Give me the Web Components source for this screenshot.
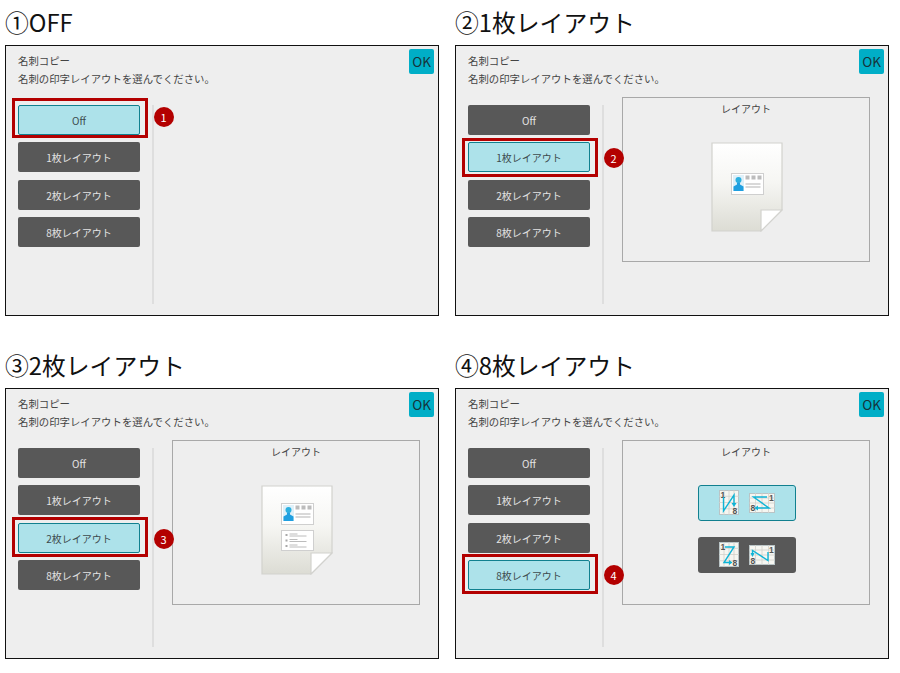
<!DOCTYPE html>
<html lang="ja">
<head>
<meta charset="utf-8">
<style>
  html, body { margin: 0; background: #fff; }
  body { width: 900px; height: 673px; overflow: hidden; }
  #sheet {
    display: grid;
    grid-template-columns: 434px 434px;
    column-gap: 16px;
    row-gap: 27px;
    padding: 0 0 0 5px;
  }
</style>
</head>
<body>
<div id="sheet">
  <copy-step heading="①OFF">
    <mode-button selected step="1">Off</mode-button>
    <mode-button>1枚レイアウト</mode-button>
    <mode-button>2枚レイアウト</mode-button>
    <mode-button>8枚レイアウト</mode-button>
  </copy-step>
  <copy-step heading="②1枚レイアウト">
    <mode-button>Off</mode-button>
    <mode-button selected step="2">1枚レイアウト</mode-button>
    <mode-button>2枚レイアウト</mode-button>
    <mode-button>8枚レイアウト</mode-button>
    <layout-box slot="preview"><paper-sheet cards="1"></paper-sheet></layout-box>
  </copy-step>
  <copy-step heading="③2枚レイアウト">
    <mode-button>Off</mode-button>
    <mode-button>1枚レイアウト</mode-button>
    <mode-button selected step="3">2枚レイアウト</mode-button>
    <mode-button>8枚レイアウト</mode-button>
    <layout-box slot="preview"><paper-sheet cards="2"></paper-sheet></layout-box>
  </copy-step>
  <copy-step heading="④8枚レイアウト">
    <mode-button>Off</mode-button>
    <mode-button>1枚レイアウト</mode-button>
    <mode-button>2枚レイアウト</mode-button>
    <mode-button selected step="4">8枚レイアウト</mode-button>
    <layout-box slot="preview">
      <order-choices></order-choices>
    </layout-box>
  </copy-step>
</div>

<script>
const jpFont = '"Noto Sans CJK JP", "Noto Sans", sans-serif';

// the red callouts were placed by hand in the source, so each sits a little differently
// step: [mark top, mark height, badge offset from button centre]
const callouts = {
  1: [-6.8, 40.3, -2.8],
  2: [-3.5, 39, 1],
  3: [-4.8, 39.4, 1.5],
  4: [-5.4, 40, 0.3],
};

class CopyStep extends HTMLElement {
  constructor() {
    super();
    this.attachShadow({ mode: "open" });
    this.shadowRoot.innerHTML = `
      <style>
        :host { display: block; font-family: ${jpFont}; }
        h2 {
          margin: 0;
          height: 45px;
          font-weight: 400;
          font-size: 23.8px;
          line-height: 44px;
          color: #111;
          white-space: nowrap;
        }
        .screen {
          box-sizing: border-box;
          height: 271px;
          border: 1.5px solid #111;
          background: #eeeeee;
          padding: 6px 4px 0 12px;
          color: #444;
        }
        .top { display: flex; justify-content: space-between; height: 53px; }
        .msg { font-size: 10.4px; line-height: 18px; }
        .ok {
          width: 25px;
          height: 25px;
          margin-top: -3px;
          border-radius: 2px;
          background: #00aec7;
          color: #16323a;
          font-size: 13.5px;
          line-height: 25px;
          text-align: center;
        }
        .body { display: flex; height: 199px; }
        .modes {
          display: flex;
          flex-direction: column;
          gap: 7.3px;
          width: 122px;
          margin-right: 12px;
        }
        .rule { width: 2px; background: #dedede; }
        .preview { margin: -8.5px 0 0 18px; }
      </style>
      <h2></h2>
      <div class="screen">
        <div class="top">
          <div class="msg">名刺コピー<br>名刺の印字レイアウトを選んでください。</div>
          <div class="ok">OK</div>
        </div>
        <div class="body">
          <div class="modes"><slot></slot></div>
          <div class="rule"></div>
          <div class="preview"><slot name="preview"></slot></div>
        </div>
      </div>`;
  }
  connectedCallback() {
    this.shadowRoot.querySelector("h2").textContent = this.getAttribute("heading");
  }
}

class ModeButton extends HTMLElement {
  constructor() {
    super();
    this.attachShadow({ mode: "open" });
    this.shadowRoot.innerHTML = `
      <style>
        :host {
          display: block;
          position: relative;
          box-sizing: border-box;
          height: 30px;
          border-radius: 2px;
          background: #585858;
          color: #e4e4e4;
          font-size: 10px;
          line-height: 32px;
          text-align: center;
        }
        :host([selected]) {
          background: #ade2ea;
          color: #3c4a4d;
          border: 1.5px solid #11808f;
          line-height: 29px;
        }
        .mark {
          position: absolute;
          left: -7.5px;
          width: 130px;
          border: 3px solid #b30000;
        }
        .badge {
          position: absolute;
          left: 134.5px;
          width: 20px;
          height: 20px;
          border-radius: 50%;
          background: #b30000;
          color: #fff;
          font-size: 11px;
          line-height: 20px;
        }
      </style>
      <slot></slot>`;
  }
  connectedCallback() {
    const step = this.getAttribute("step");
    if (step) {
      const [markTop, markHeight, badgeOffset] = callouts[step];
      // offsets are from the padding box, which starts inside the 1.5px border
      this.shadowRoot.innerHTML += `
        <div class="mark" style="top:${markTop - 1.5}px;height:${markHeight - 6}px"></div>
        <div class="badge" style="top:${3.5 + badgeOffset}px">${step}</div>`;
    }
  }
}

class LayoutBox extends HTMLElement {
  constructor() {
    super();
    this.attachShadow({ mode: "open" });
    this.shadowRoot.innerHTML = `
      <style>
        :host {
          display: flex;
          flex-direction: column;
          align-items: center;
          box-sizing: border-box;
          width: 248px;
          height: 165px;
          border: 1px solid #a8a8a8;
          color: #444;
        }
        .title { font-size: 10px; line-height: 14px; margin: 4px 0 0; height: 14px; }
        .content { margin: 26px 0 0 1px; }
      </style>
      <div class="title">レイアウト</div>
      <div class="content"><slot></slot></div>`;
  }
}

const cardPhoto = (x, y) => `
  <rect x="${x}" y="${y}" width="32" height="21" fill="#fff" stroke="#cfcfcf" stroke-width="1"/>
  <rect x="${x + 1.5}" y="${y + 1.5}" width="11" height="16" fill="#dff0f8"/>
  <circle cx="${x + 7}" cy="${y + 6.5}" r="3" fill="#2cb0e0"/>
  <path d="M${x + 5.5} ${y + 9}h3v2l3.5 2v4.500h-10v-4.500l3.500-2z" fill="#1f9fe0"/>
  <path d="M${x + 14} ${y + 2}h4v4h-4zM${x + 20} ${y + 2}h4v4h-4zM${x + 26} ${y + 2}h4v4h-4z" fill="#bcbcbc"/>
  <path d="M${x + 14} ${y + 10.500}h15M${x + 14} ${y + 13.500}h15" stroke="#b4b4b4" stroke-width="1.2"/>`;

const cardList = (x, y) => `
  <rect x="${x}" y="${y}" width="32" height="20" fill="#fff" stroke="#cfcfcf" stroke-width="1"/>
  <path d="M${x + 4} ${y + 3.500}h2v2h-2zM${x + 4} ${y + 9}h2v2h-2zM${x + 4} ${y + 14.500}h2v2h-2z" fill="#a8a8a8"/>
  <path d="M${x + 8} ${y + 3.500}h8M${x + 8} ${y + 5.500}h17M${x + 8} ${y + 9}h8M${x + 8} ${y + 11}h17M${x + 8} ${y + 14.500}h8M${x + 8} ${y + 16.500}h17" stroke="#bcbcbc" stroke-width="1"/>`;

class PaperSheet extends HTMLElement {
  constructor() {
    super();
    this.attachShadow({ mode: "open" });
  }
  connectedCallback() {
    const two = this.getAttribute("cards") === "2";
    const id = "paper" + this.getAttribute("cards");
    this.shadowRoot.innerHTML = `
      <style>:host { display: block; width: 72px; height: 90px; } svg { display: block; }</style>
      <svg width="72" height="90" viewBox="0 0 72 90">
        <defs><linearGradient id="${id}" x1="0" y1="0" x2="0" y2="1">
          <stop offset="0" stop-color="#ffffff"/><stop offset="0.45" stop-color="#f6f6f3"/><stop offset="1" stop-color="#dcdcd4"/>
        </linearGradient></defs>
        <path d="M1 1H71V68L50 89H1z" fill="url(#${id})" stroke="#d2d2ce" stroke-width="1.2"/>
        <path d="M50 89V68H71z" fill="#fff" stroke="#d2d2ce" stroke-width="1.2"/>
        ${two ? cardPhoto(20.5, 18.5) + cardList(20.5, 45.5) : cardPhoto(20.5, 31.5)}
      </svg>`;
  }
}

// one small page with a reading-order arrow, used inside the 8-up choices
class OrderIcon extends HTMLElement {
  constructor() {
    super();
    this.attachShadow({ mode: "open" });
  }
  connectedCallback() {
    const land = this.hasAttribute("landscape");
    const w = land ? 26 : 20;
    const h = land ? 20 : 25;
    let lines = "";
    for (let i = 1; i < 4; i++) {
      lines += `<path d="M${(w / 4) * i} 0V${h}" stroke="#d2d2cc" stroke-width=".8"/>`;
      lines += `<path d="M0 ${(h / 4) * i}H${w}" stroke="#d2d2cc" stroke-width=".8"/>`;
    }
    const [ox, oy] = this.getAttribute("one").split(",");
    const [ex, ey] = this.getAttribute("eight").split(",");
    this.shadowRoot.innerHTML = `
      <style>:host { display: block; line-height: 0; } svg { display: block; }
        text { font: 700 8.5px "Liberation Sans", sans-serif; fill: #555; }</style>
      <svg width="${w}" height="${h}" viewBox="0 0 ${w} ${h}">
        <rect x=".5" y=".5" width="${w - 1}" height="${h - 1}" fill="#f6f6f1" stroke="#b9c4c6"/>
        ${lines}
        <text x="${ox}" y="${oy}">1</text>
        <text x="${ex}" y="${ey}">8</text>
        <path d="${this.getAttribute("arrow")}" fill="none" stroke="#0fb4d6" stroke-width="1.4"/>
        <path d="${this.getAttribute("head")}" fill="#0fb4d6"/>
      </svg>`;
  }
}

class OrderChoices extends HTMLElement {
  constructor() {
    super();
    this.attachShadow({ mode: "open" });
    this.shadowRoot.innerHTML = `
      <style>
        :host { display: flex; flex-direction: column; gap: 16px; }
        .choice {
          box-sizing: border-box;
          display: flex;
          align-items: center;
          justify-content: center;
          gap: 10px;
          width: 98px;
          height: 36px;
          border-radius: 3px;
          background: #585858;
        }
        .on { background: #ade2ea; border: 1.5px solid #11808f; }
      </style>
      <div class="choice on">
        <order-icon one="1.500,8" eight="13.500,24" arrow="M4.500 7V21L15 5V14" head="M12.500 13h5L15 17z"></order-icon>
        <order-icon landscape one="20,8" eight="1.500,18" arrow="M18 4H4.500L20 15H9" head="M9 12.500v5L5.500 15z"></order-icon>
      </div>
      <div class="choice">
        <order-icon one="1.500,8" eight="13.500,24" arrow="M6 5H15L5 20.500H10" head="M10 18v5l3.500-2.500z"></order-icon>
        <order-icon landscape one="20,8" eight="1.500,19" arrow="M19 7V15.500L3.500 5.500V10" head="M1.500 8h4L3.500 12z"></order-icon>
      </div>`;
  }
}

customElements.define("copy-step", CopyStep);
customElements.define("mode-button", ModeButton);
customElements.define("layout-box", LayoutBox);
customElements.define("paper-sheet", PaperSheet);
customElements.define("order-icon", OrderIcon);
customElements.define("order-choices", OrderChoices);
</script>
</body>
</html>
